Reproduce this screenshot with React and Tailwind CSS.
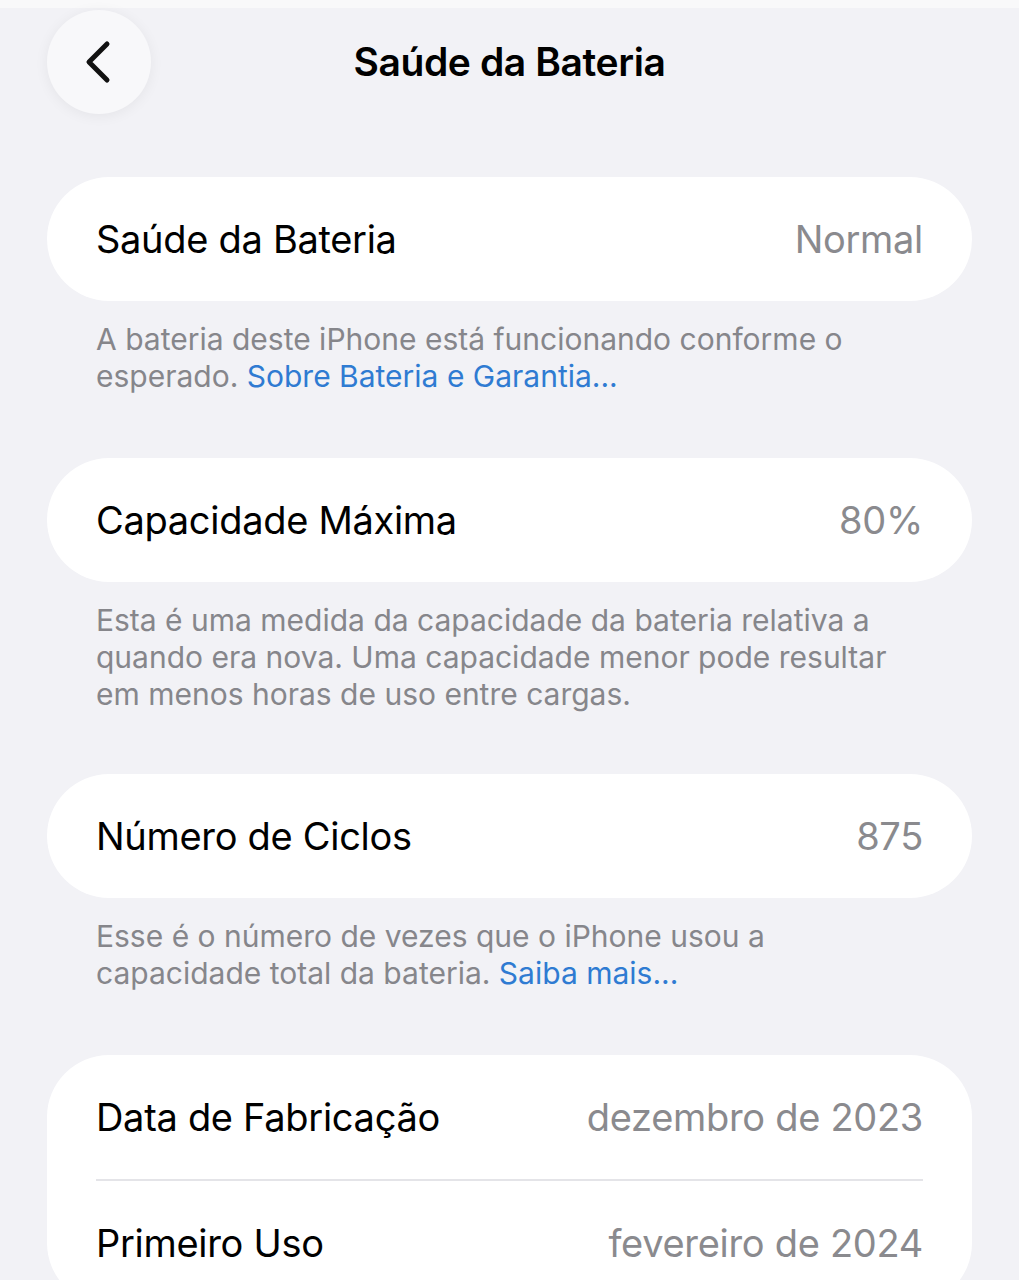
import React from 'react';

function Row({ label, value }) {
  return (
    <div className="flex items-center justify-between h-[124px]">
      <span className="text-[38px] text-black tracking-[-0.3px]">{label}</span>
      <span className="text-[38px] text-[#8a8a8e] tracking-[-0.3px]">{value}</span>
    </div>
  );
}

function Card({ children }) {
  return <div className="bg-white rounded-[62px] px-[49px]">{children}</div>;
}

function Note({ children, className = 'mb-[63px]' }) {
  return (
    <p className={`mt-[20px] px-[49px] text-[30px] leading-[37px] text-[#86868b] ${className}`}>
      {children}
    </p>
  );
}

export default function App() {
  return (
    <div
      className="w-[1019px] h-[1280px] overflow-hidden bg-[#f2f2f6]"
      style={{ fontFamily: 'Inter, "Noto Sans", sans-serif' }}
    >
      <div className="h-[8px] bg-[#f9f9fa]" />
      <div className="px-[47px]">
        {/* Header */}
        <div className="relative flex items-center justify-center h-[104px] mt-[2px]">
          <button className="absolute left-0 top-0 w-[104px] h-[104px] rounded-full bg-[#f8f8fa] shadow-[0_2px_14px_rgba(0,0,0,0.06)] flex items-center justify-center">
            <svg width="40" height="48" viewBox="0 0 40 48" fill="none">
              <path d="M28 6 L10 24 L28 42" stroke="#111" strokeWidth="5" strokeLinecap="round" strokeLinejoin="round" />
            </svg>
          </button>
          <h1 className="text-[39px] font-semibold text-black tracking-[-0.4px]">Saúde da Bateria</h1>
        </div>

        <div className="mt-[63px]">
          <Card>
            <Row label="Saúde da Bateria" value="Normal" />
          </Card>
          <Note>
            A bateria deste iPhone está funcionando conforme o esperado.{' '}
            <span className="text-[#2f7bd2]">Sobre Bateria e Garantia...</span>
          </Note>

          <Card>
            <Row label="Capacidade Máxima" value="80%" />
          </Card>
          <Note className="mb-[61px]">
            Esta é uma medida da capacidade da bateria relativa a quando era nova. Uma capacidade menor pode resultar em menos horas de uso entre cargas.
          </Note>

          <Card>
            <Row label="Número de Ciclos" value="875" />
          </Card>
          <Note>
            Esse é o número de vezes que o iPhone usou a capacidade total da bateria.{' '}
            <span className="text-[#2f7bd2]">Saiba mais...</span>
          </Note>

          <Card>
            <div className="border-b-2 border-[#e4e4e8]">
              <Row label="Data de Fabricação" value="dezembro de 2023" />
            </div>
            <Row label="Primeiro Uso" value="fevereiro de 2024" />
          </Card>
        </div>
      </div>
    </div>
  );
}
